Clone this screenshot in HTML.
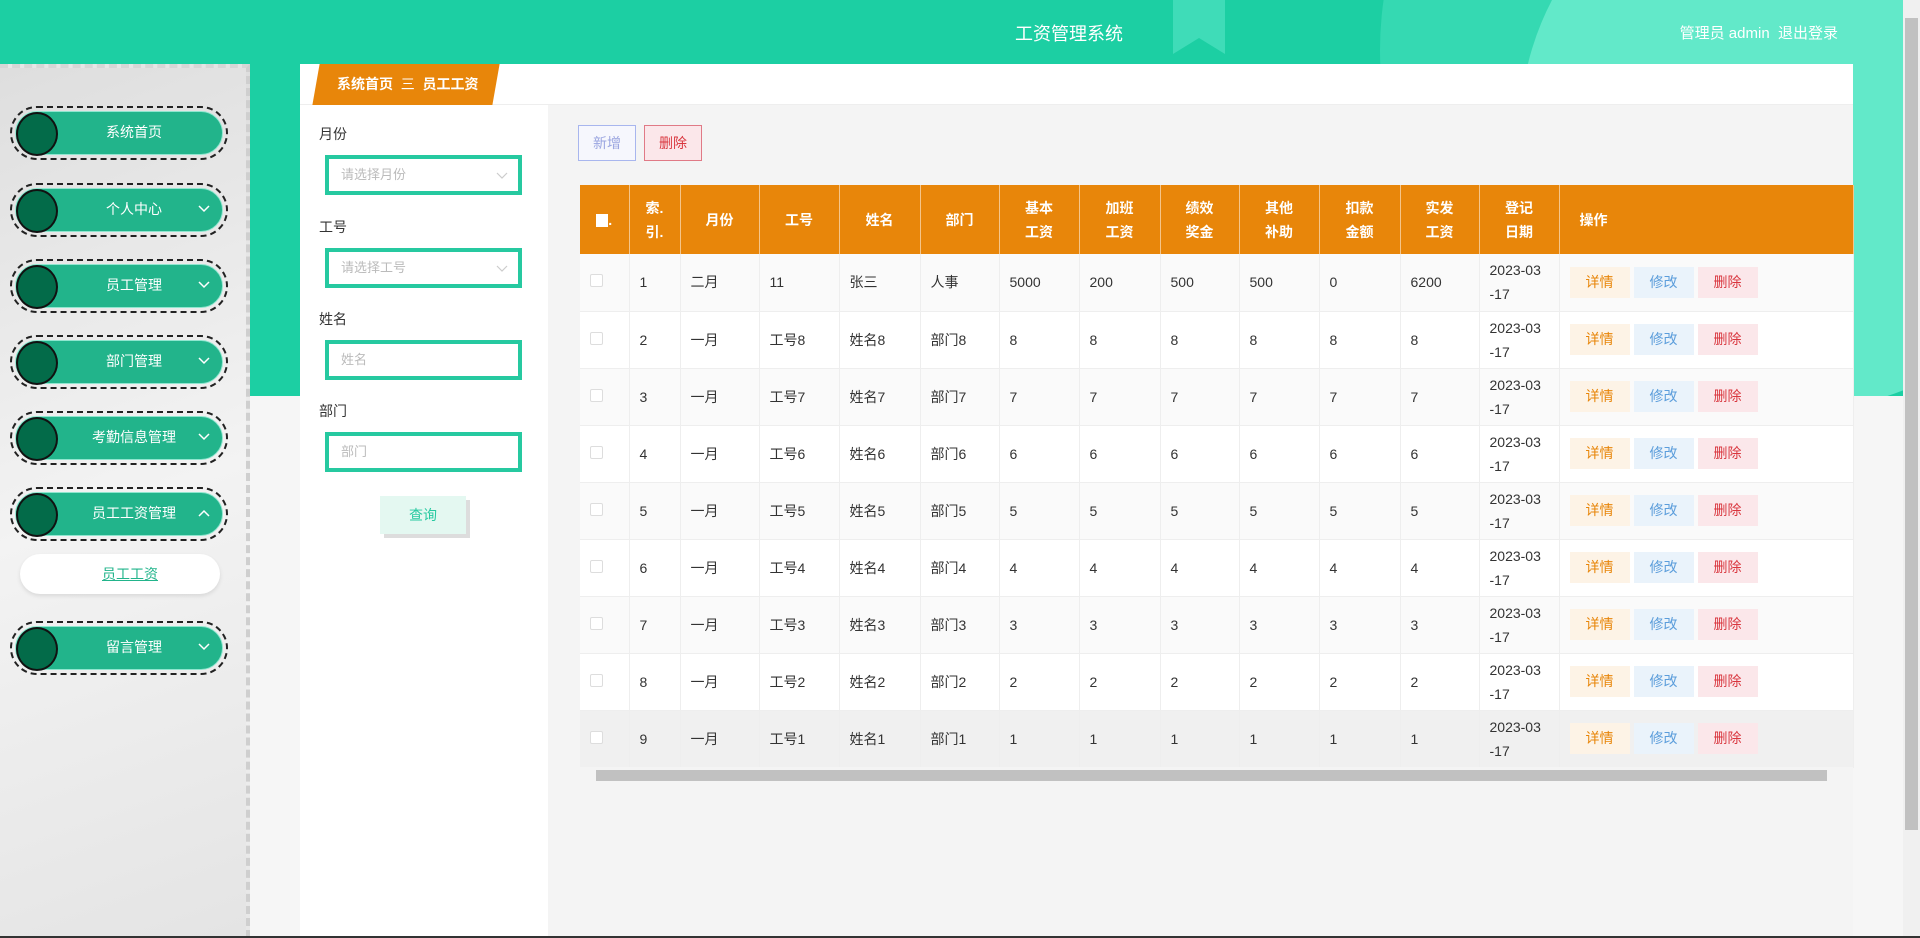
<!DOCTYPE html>
<html><head><meta charset="utf-8"><style>
*{box-sizing:border-box;margin:0;padding:0}
body{width:1920px;height:938px;overflow:hidden;background:#f6f6f6;font-family:"Liberation Sans","Noto Sans CJK SC",sans-serif;font-size:14px;color:#333;position:relative}
.hdr{position:absolute;left:0;top:0;width:1920px;height:64px;background:#1ccfa3;overflow:hidden}
.band{position:absolute;left:0;top:64px;width:1903px;height:332px;background:#1ccfa3;overflow:hidden}
.circ{position:absolute;left:1520px;top:-150px;width:560px;height:560px;border-radius:50%;background:#62e9c9}
.circ2{position:absolute;left:1380px;top:-300px;width:700px;height:700px;border-radius:50%;background:#35d9b2}
.title{position:absolute;left:1015px;width:100px;top:20px;text-align:center;color:#fff;font-size:18px;z-index:3;white-space:nowrap}
.ur{position:absolute;right:82px;top:22px;color:#fff;font-size:15px;z-index:3}
.side{position:absolute;left:0;top:64px;width:250px;height:874px;background:linear-gradient(160deg,#dedede,#f3f3f3 50%,#e4e4e4);border-right:4px dashed #cfcfcf;border-top:4px dashed #d6d6d6}
.pill{position:absolute;left:10px;width:218px;height:54px;border:2px dashed #222;border-radius:27px}
.pill .in{position:absolute;left:3px;top:3px;right:3px;bottom:3px;background:#22b48b;border-radius:24px;border:1px solid #8fe6cf}
.pill .dot{position:absolute;left:4px;top:4px;width:42px;height:44px;border-radius:50%;background:#036b49;border:2px solid #111}
.pill span{position:absolute;left:60px;right:30px;top:14px;text-align:center;color:#fff;font-size:14px}
.pill svg{position:absolute;right:16px;top:20px}
.sub{position:absolute;left:20px;width:200px;height:40px;background:#fff;border-radius:20px;box-shadow:0 2px 4px rgba(0,0,0,.1);text-align:center;line-height:40px;color:#22b48b;text-decoration:underline;font-size:14px;padding-left:20px}
.main{position:absolute;left:300px;top:64px;width:1553px;height:874px;background:#f4f4f4}
.crumb{position:absolute;left:0;top:0;width:1553px;height:41px;background:#fff;border-bottom:1px solid #eee}
.crumb .o{position:absolute;left:16px;top:0;width:180px;height:41px;background:#e8860a;transform:skewX(-10deg)}
.crumb .t{position:absolute;left:37px;top:10px;color:#fff;font-weight:bold;font-size:14px}
.filt{position:absolute;left:0;top:41px;width:248px;height:833px;background:#fff}
.lab{position:absolute;left:19px;font-size:14px;color:#333}
.inp{position:absolute;left:25px;width:197px;height:40px;border:4px solid #26c9a0;background:#fff;color:#bbb;padding-left:12px;line-height:32px;font-size:13px}
.inp svg{position:absolute;right:10px;top:13px}
.q{position:absolute;left:80px;top:391px;width:86px;height:38px;background:#e4f8f1;color:#26c9a0;text-align:center;line-height:38px;box-shadow:4px 4px 0 #ddd}
.btn{position:absolute;top:61px;height:36px;width:58px;text-align:center;line-height:34px;font-size:14px}
table{position:absolute;left:280px;top:121px;border-collapse:collapse;table-layout:fixed;width:1273px;background:#fff}
th{background:#e8860a;color:#fff;font-weight:bold;height:69px;font-size:14px;border-right:1px solid #f5c58a;line-height:24px}
td{height:57px;border-right:1px solid #eee;border-bottom:1px solid #eee;padding-left:10px;font-size:14px;color:#333;line-height:24px}
tr:nth-child(even) td{background:#fafafa}
tr.l td{background:#f0f0f0}
.cb{display:inline-block;width:13px;height:13px;border:1px solid #ddd;border-radius:2px;background:#fff}
.a{display:inline-block;width:60px;height:31px;line-height:31px;text-align:center;margin-right:4px;font-size:14px}
.a1{background:#fdf3e6;color:#e8860a}.a2{background:#eaf3fb;color:#5b9ddb}.a3{background:#fbe7ea;color:#d9363e}
.sb{position:absolute;left:280px;top:703px;width:1273px;height:16px;background:#f4f4f4}
.sb div{position:absolute;left:16px;right:26px;top:3px;height:11px;background:#c1c1c1}
.vs{position:absolute;left:1903px;top:0;width:17px;height:938px;background:#f0f0f0}
.vs div{position:absolute;left:2px;top:18px;width:13px;height:812px;background:#c1c1c1}
</style></head><body>
<div class="hdr"><div class="circ2"></div><div class="circ"></div>
<svg style="position:absolute;left:1173px;top:0" width="52" height="54"><polygon points="0,0 52,0 52,54 26,38 0,54" fill="#3fdcb8"/></svg></div>
<div class="band"><div class="circ2" style="top:-364px"></div><div class="circ" style="top:-214px"></div></div>
<div class="title">工资管理系统</div>
<div class="ur">管理员 admin &nbsp;退出登录</div>
<div class="side">
<div class="pill" style="top:38px"><div class="in"></div><div class="dot"></div><span>系统首页</span></div>
<div class="pill" style="top:115px"><div class="in"></div><div class="dot"></div><span>个人中心</span><svg width="12" height="8"><path d="M1 1l5 5 5-5" stroke="#fff" stroke-width="1.5" fill="none"/></svg></div>
<div class="pill" style="top:191px"><div class="in"></div><div class="dot"></div><span>员工管理</span><svg width="12" height="8"><path d="M1 1l5 5 5-5" stroke="#fff" stroke-width="1.5" fill="none"/></svg></div>
<div class="pill" style="top:267px"><div class="in"></div><div class="dot"></div><span>部门管理</span><svg width="12" height="8"><path d="M1 1l5 5 5-5" stroke="#fff" stroke-width="1.5" fill="none"/></svg></div>
<div class="pill" style="top:343px"><div class="in"></div><div class="dot"></div><span>考勤信息管理</span><svg width="12" height="8"><path d="M1 1l5 5 5-5" stroke="#fff" stroke-width="1.5" fill="none"/></svg></div>
<div class="pill" style="top:419px"><div class="in"></div><div class="dot"></div><span>员工工资管理</span><svg width="12" height="8"><path d="M1 7l5-5 5 5" stroke="#fff" stroke-width="1.5" fill="none"/></svg></div>
<div class="sub" style="top:486px">员工工资</div>
<div class="pill" style="top:553px"><div class="in"></div><div class="dot"></div><span>留言管理</span><svg width="12" height="8"><path d="M1 1l5 5 5-5" stroke="#fff" stroke-width="1.5" fill="none"/></svg></div>
</div>
<div class="main">
<div class="crumb"><div class="o"></div><div class="t">系统首页 &nbsp;<span style="font-weight:normal">三</span>&nbsp; 员工工资</div></div>
<div class="filt">
<div class="lab" style="top:19px">月份</div>
<div class="inp" style="top:50px">请选择月份<svg width="12" height="8"><path d="M1 1l5 5 5-5" stroke="#ccc" stroke-width="1.2" fill="none"/></svg></div>
<div class="lab" style="top:112px">工号</div>
<div class="inp" style="top:143px">请选择工号<svg width="12" height="8"><path d="M1 1l5 5 5-5" stroke="#ccc" stroke-width="1.2" fill="none"/></svg></div>
<div class="lab" style="top:204px">姓名</div>
<div class="inp" style="top:235px">姓名</div>
<div class="lab" style="top:296px">部门</div>
<div class="inp" style="top:327px">部门</div>
<div class="q">查询</div>
</div>
<div class="btn" style="left:278px;border:1px solid #a8b6ee;color:#9aa5e0;background:#f6f7fd">新增</div>
<div class="btn" style="left:344px;border:1px solid #e07a86;color:#d9363e;background:#fbe7ea">删除</div>
<table>
<colgroup><col width="49"><col width="51"><col width="79"><col width="80"><col width="81"><col width="79"><col width="80"><col width="81"><col width="79"><col width="80"><col width="81"><col width="79"><col width="80"><col width="294"></colgroup>
<tr><th><span style="display:inline-block;width:12px;height:13px;background:#fff;vertical-align:middle"></span>.</th><th>索.<br>引.</th><th>月份</th><th>工号</th><th>姓名</th><th>部门</th><th>基本<br>工资</th><th>加班<br>工资</th><th>绩效<br>奖金</th><th>其他<br>补助</th><th>扣款<br>金额</th><th>实发<br>工资</th><th>登记<br>日期</th><th style="text-align:left;padding-left:20px">操作</th></tr>
<tr><td><span class="cb"></span></td><td>1</td><td>二月</td><td>11</td><td>张三</td><td>人事</td><td>5000</td><td>200</td><td>500</td><td>500</td><td>0</td><td>6200</td><td>2023-03<br>-17</td><td><span class="a a1">详情</span><span class="a a2">修改</span><span class="a a3">删除</span></td></tr>
<tr><td><span class="cb"></span></td><td>2</td><td>一月</td><td>工号8</td><td>姓名8</td><td>部门8</td><td>8</td><td>8</td><td>8</td><td>8</td><td>8</td><td>8</td><td>2023-03<br>-17</td><td><span class="a a1">详情</span><span class="a a2">修改</span><span class="a a3">删除</span></td></tr>
<tr><td><span class="cb"></span></td><td>3</td><td>一月</td><td>工号7</td><td>姓名7</td><td>部门7</td><td>7</td><td>7</td><td>7</td><td>7</td><td>7</td><td>7</td><td>2023-03<br>-17</td><td><span class="a a1">详情</span><span class="a a2">修改</span><span class="a a3">删除</span></td></tr>
<tr><td><span class="cb"></span></td><td>4</td><td>一月</td><td>工号6</td><td>姓名6</td><td>部门6</td><td>6</td><td>6</td><td>6</td><td>6</td><td>6</td><td>6</td><td>2023-03<br>-17</td><td><span class="a a1">详情</span><span class="a a2">修改</span><span class="a a3">删除</span></td></tr>
<tr><td><span class="cb"></span></td><td>5</td><td>一月</td><td>工号5</td><td>姓名5</td><td>部门5</td><td>5</td><td>5</td><td>5</td><td>5</td><td>5</td><td>5</td><td>2023-03<br>-17</td><td><span class="a a1">详情</span><span class="a a2">修改</span><span class="a a3">删除</span></td></tr>
<tr><td><span class="cb"></span></td><td>6</td><td>一月</td><td>工号4</td><td>姓名4</td><td>部门4</td><td>4</td><td>4</td><td>4</td><td>4</td><td>4</td><td>4</td><td>2023-03<br>-17</td><td><span class="a a1">详情</span><span class="a a2">修改</span><span class="a a3">删除</span></td></tr>
<tr><td><span class="cb"></span></td><td>7</td><td>一月</td><td>工号3</td><td>姓名3</td><td>部门3</td><td>3</td><td>3</td><td>3</td><td>3</td><td>3</td><td>3</td><td>2023-03<br>-17</td><td><span class="a a1">详情</span><span class="a a2">修改</span><span class="a a3">删除</span></td></tr>
<tr><td><span class="cb"></span></td><td>8</td><td>一月</td><td>工号2</td><td>姓名2</td><td>部门2</td><td>2</td><td>2</td><td>2</td><td>2</td><td>2</td><td>2</td><td>2023-03<br>-17</td><td><span class="a a1">详情</span><span class="a a2">修改</span><span class="a a3">删除</span></td></tr>
<tr class="l"><td><span class="cb"></span></td><td>9</td><td>一月</td><td>工号1</td><td>姓名1</td><td>部门1</td><td>1</td><td>1</td><td>1</td><td>1</td><td>1</td><td>1</td><td>2023-03<br>-17</td><td><span class="a a1">详情</span><span class="a a2">修改</span><span class="a a3">删除</span></td></tr>
</table>
<div class="sb"><div></div></div>
</div>
<div class="vs"><div></div></div>
<div style="position:absolute;left:0;top:936px;width:1920px;height:2px;background:#333"></div>
</body></html>
